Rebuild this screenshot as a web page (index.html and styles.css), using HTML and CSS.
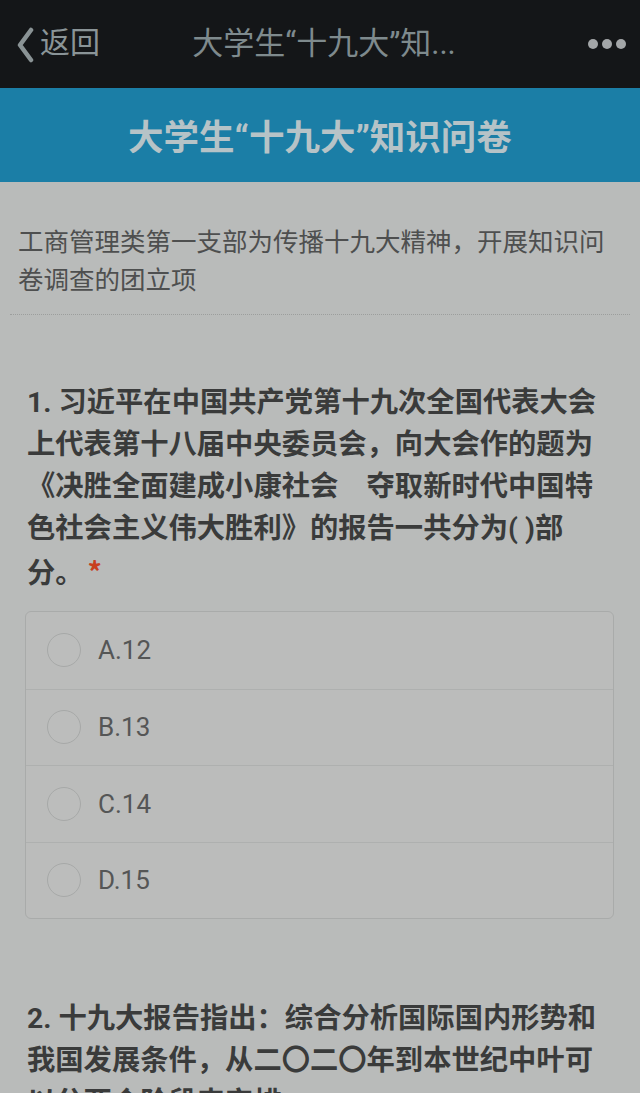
FILE: index.html
```html
<!DOCTYPE html>
<html lang="zh-CN">
<head>
<meta charset="utf-8">
<title>大学生“十九大”知识问卷</title>
<link rel="stylesheet" href="styles.css">
</head>
<body>
<div class="page">
  <header class="topbar">
    <div class="back">
      <svg class="chev" width="20" height="36" viewBox="0 0 20 36"><path d="M16 3 L5 18 L16 33" fill="none" stroke="#8a9395" stroke-width="4.5" stroke-linecap="round" stroke-linejoin="round"/></svg>
      <span>返回</span>
    </div>
    <div class="toptitle">大学生“十九大”知...</div>
    <div class="dots"><i></i><i></i><i></i></div>
  </header>
  <div class="banner">大学生“十九大”知识问卷</div>
  <div class="desc">工商管理类第一支部为传播十九大精神，开展知识问卷调查的团立项</div>
  <section class="question q1">
    <div class="qtext">1. 习近平在中国共产党第十九次全国代表大会上代表第十八届中央委员会，向大会作的题为《决胜全面建成小康社会　夺取新时代中国特色社会主义伟大胜利》的报告一共分为( )部分。<span class="req">*</span></div>
    <ul class="options">
      <li><span class="radio"></span><span class="opt">A.12</span></li>
      <li><span class="radio"></span><span class="opt">B.13</span></li>
      <li><span class="radio"></span><span class="opt">C.14</span></li>
      <li><span class="radio"></span><span class="opt">D.15</span></li>
    </ul>
  </section>
  <section class="question q2">
    <div class="qtext">2. 十九大报告指出：综合分析国际国内形势和我国发展条件，从二〇二〇年到本世纪中叶可以分两个阶段来安排。</div>
  </section>
</div>
</body>
</html>
```

FILE: styles.css
```css
* { box-sizing: border-box; }
html, body { margin: 0; padding: 0; }
body {
  background: #b9bbba;
  font-family: Roboto, "Noto Sans CJK SC", sans-serif;
  width: 640px;
  height: 1093px;
  overflow: hidden;
}
.page { width: 640px; }
.topbar {
  height: 88px;
  background: #141618;
  display: flex;
  align-items: center;
  position: relative;
  padding: 0 14px 0 15px;
}
.back {
  display: flex;
  align-items: center;
  color: #8a9497;
  font-size: 30px;
  line-height: 1;
}
.chev { margin-right: 5px; margin-top: 2px; }
.back span { margin-top: -2px; }
.toptitle {
  flex: 1;
  text-align: center;
  color: #7e8a8d;
  font-size: 31px;
  line-height: 1;
  margin-top: -2px;
  padding-right: 40px;
}
.dots { display: flex; gap: 4px; margin-top: -1px; }
.dots i {
  display: block;
  width: 10px;
  height: 10px;
  border-radius: 50%;
  background: #a3a6a8;
}
.banner {
  height: 94px;
  background: #1b7ea6;
  color: #b6c3c7;
  font-size: 35.5px;
  font-weight: bold;
  display: flex;
  align-items: center;
  justify-content: center;
  padding-bottom: 2px;
}
.desc {
  margin: 0 10px;
  padding: 39px 8px 17px 8px;
  font-size: 25.5px;
  line-height: 38px;
  color: #4e4f4f;
  font-family: "Noto Sans CJK SC", sans-serif;
  border-bottom: 1px dotted #9c9e9d;
}
.question { padding: 0 27px 0 27px; }
.q1 { padding-top: 67px; }
.q2 { padding-top: 79px; }
.qtext {
  font-size: 28.3px;
  line-height: 42px;
  font-weight: bold;
  color: #3a3b3b;
}
.req { color: #c8401f; margin-left: 4px; font-family: "Noto Sans CJK SC", sans-serif; }
.options {
  list-style: none;
  margin: 16px 0 0 -2px;
  padding: 0;
  border: 1px solid #a9abaa;
  border-radius: 6px;
  background: #bbbcbb;
  width: 589px;
}
.options li {
  height: 76.5px;
  display: flex;
  align-items: center;
  padding-left: 21px;
  border-top: 1px solid #aeb0af;
}
.options li:first-child { border-top: none; }
.radio {
  width: 34px;
  height: 34px;
  border-radius: 50%;
  border: 1px solid #a7a9a8;
  background: #bcbdbc;
  margin-right: 17px;
}
.opt {
  font-size: 26px;
  color: #555656;
  font-family: Roboto, sans-serif;
}
```
